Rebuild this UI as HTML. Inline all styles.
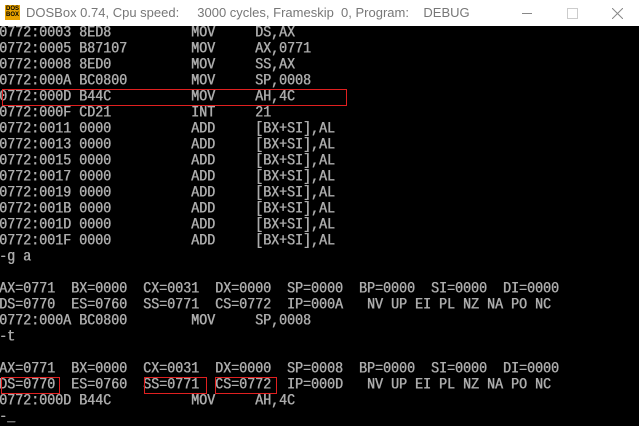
<!DOCTYPE html>
<html><head><style>
html,body{margin:0;width:639px;height:426px;overflow:hidden;background:#000}
body{position:relative}
#tb{position:absolute;left:0;top:0;width:639px;height:26px;background:#fff;font-family:"Liberation Sans",sans-serif;font-size:13px;color:#777}
#tb .t{position:absolute;left:26px;top:5px;white-space:pre}
#ic{position:absolute;left:5px;top:5px;width:15px;height:15px;background:#e8a200;font:bold 6px/6px "Liberation Sans",sans-serif;color:#000;text-align:center;padding-top:1px;box-sizing:border-box}
#term{position:absolute;left:-1px;top:26px;font-family:"Liberation Mono",monospace;font-size:13.33px;color:#ababab}
#term div{height:16px;line-height:16px;white-space:pre;transform:scaleY(1.2);transform-origin:0 50%;text-shadow:0.5px 0 0 #ababab}
.r{position:absolute;border:1px solid #e02020}
</style></head><body>
<div id="tb"><div id="ic">DOS<br>BOX</div><span class="t">DOSBox 0.74, Cpu speed:     3000 cycles, Frameskip  0, Program:    DEBUG</span><div style="position:absolute;left:522px;top:13px;width:10px;height:1px;background:#888"></div><div style="position:absolute;left:567px;top:8px;width:9px;height:9px;border:1px solid #ccc"></div><svg style="position:absolute;left:612px;top:8px" width="11" height="11"><path d="M0 0L11 11M11 0L0 11" stroke="#888" stroke-width="1"/></svg></div>
<div id="term"><div>0772:0003 8ED8          MOV     DS,AX</div><div>0772:0005 B87107        MOV     AX,0771</div><div>0772:0008 8ED0          MOV     SS,AX</div><div>0772:000A BC0800        MOV     SP,0008</div><div>0772:000D B44C          MOV     AH,4C</div><div>0772:000F CD21          INT     21</div><div>0772:0011 0000          ADD     [BX+SI],AL</div><div>0772:0013 0000          ADD     [BX+SI],AL</div><div>0772:0015 0000          ADD     [BX+SI],AL</div><div>0772:0017 0000          ADD     [BX+SI],AL</div><div>0772:0019 0000          ADD     [BX+SI],AL</div><div>0772:001B 0000          ADD     [BX+SI],AL</div><div>0772:001D 0000          ADD     [BX+SI],AL</div><div>0772:001F 0000          ADD     [BX+SI],AL</div><div>-g a</div><div> </div><div>AX=0771  BX=0000  CX=0031  DX=0000  SP=0000  BP=0000  SI=0000  DI=0000</div><div>DS=0770  ES=0760  SS=0771  CS=0772  IP=000A   NV UP EI PL NZ NA PO NC</div><div>0772:000A BC0800        MOV     SP,0008</div><div>-t</div><div> </div><div>AX=0771  BX=0000  CX=0031  DX=0000  SP=0008  BP=0000  SI=0000  DI=0000</div><div>DS=0770  ES=0760  SS=0771  CS=0772  IP=000D   NV UP EI PL NZ NA PO NC</div><div>0772:000D B44C          MOV     AH,4C</div><div>-_</div></div>
<div class="r" style="left:2px;top:89px;width:343px;height:15px"></div>
<div class="r" style="left:1px;top:377px;width:57px;height:15px"></div>
<div class="r" style="left:144px;top:377px;width:61px;height:15px"></div>
<div class="r" style="left:215px;top:377px;width:60px;height:15px"></div>
</body></html>
